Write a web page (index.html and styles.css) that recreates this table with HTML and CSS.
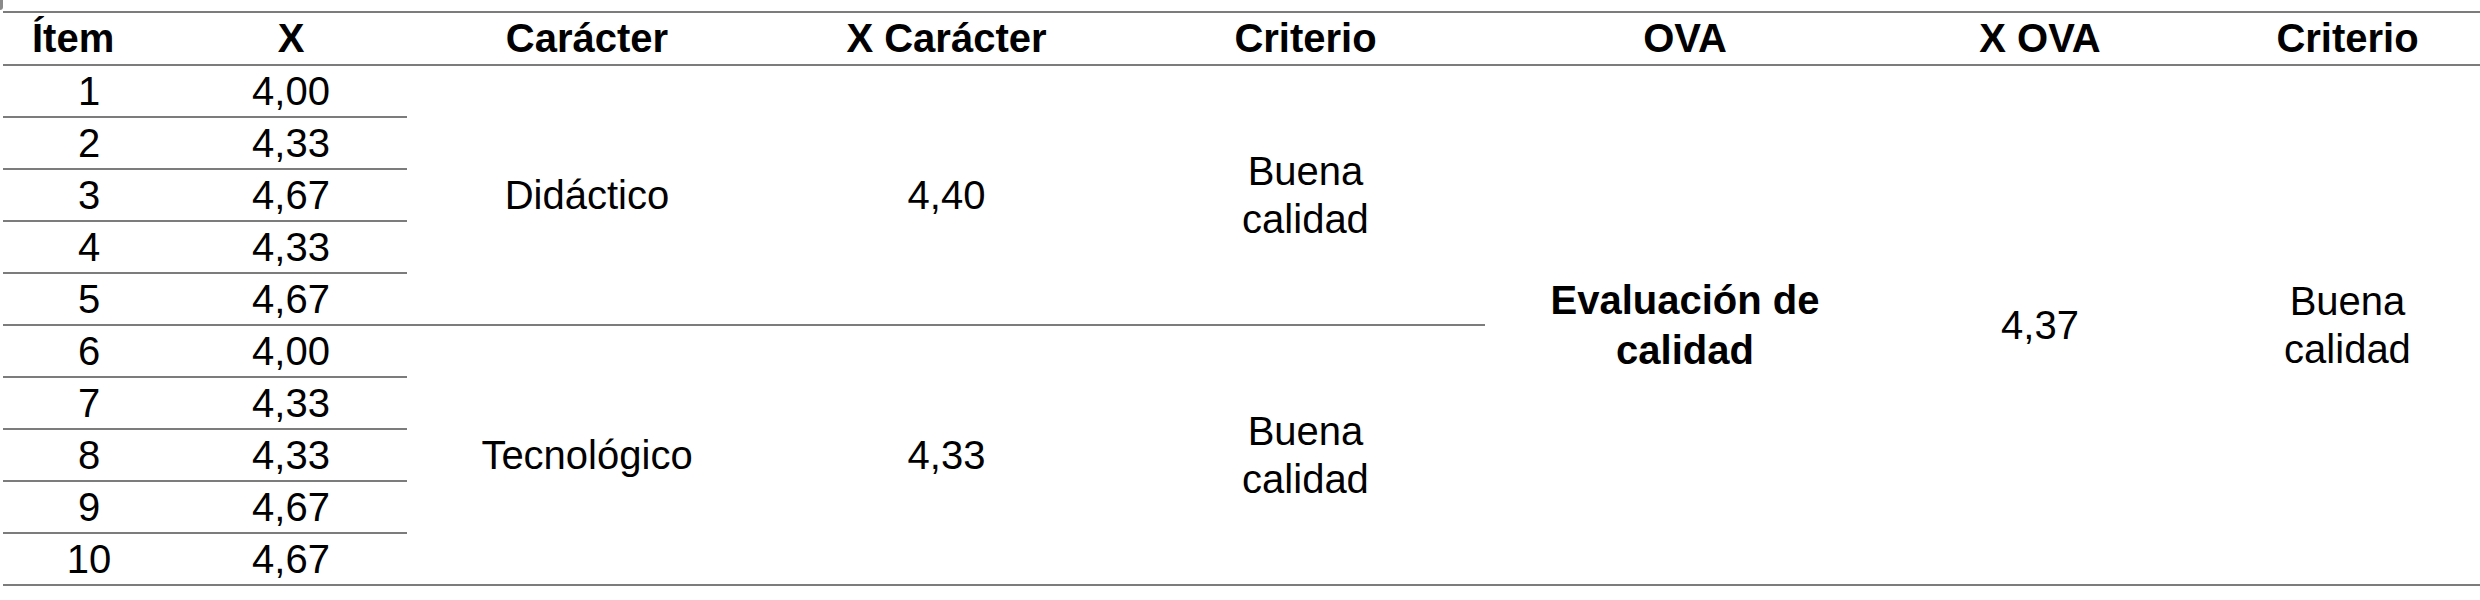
FILE: index.html
```html
<!DOCTYPE html>
<html lang="es">
<head>
<meta charset="utf-8">
<title>Evaluación de calidad OVA</title>
<link rel="stylesheet" href="styles.css">
</head>
<body>
<div class="page">
  <div class="table">
    <div class="cell head head-item">Ítem</div>
    <div class="cell head">X</div>
    <div class="cell head">Carácter</div>
    <div class="cell head">X Carácter</div>
    <div class="cell head">Criterio</div>
    <div class="cell head">OVA</div>
    <div class="cell head">X OVA</div>
    <div class="cell head">Criterio</div>

    <div class="cell num">1</div><div class="cell val">4,00</div>
    <div class="cell group g1 c3">Didáctico</div>
    <div class="cell group g1 c4">4,40</div>
    <div class="cell group g1 c5">Buena<br>calidad</div>
    <div class="cell big c6"><strong>Evaluación de<br>calidad</strong></div>
    <div class="cell big c7">4,37</div>
    <div class="cell big c8">Buena<br>calidad</div>

    <div class="cell num">2</div><div class="cell val">4,33</div>
    <div class="cell num">3</div><div class="cell val">4,67</div>
    <div class="cell num">4</div><div class="cell val">4,33</div>
    <div class="cell num">5</div><div class="cell val">4,67</div>

    <div class="cell num">6</div><div class="cell val">4,00</div>
    <div class="cell group g2 c3">Tecnológico</div>
    <div class="cell group g2 c4">4,33</div>
    <div class="cell group g2 c5">Buena<br>calidad</div>

    <div class="cell num">7</div><div class="cell val">4,33</div>
    <div class="cell num">8</div><div class="cell val">4,33</div>
    <div class="cell num">9</div><div class="cell val">4,67</div>
    <div class="cell num">10</div><div class="cell val">4,67</div>
  </div>
</div>
</body>
</html>
```

FILE: styles.css
```css
html, body {
  margin: 0;
  padding: 0;
  background: #ffffff;
  overflow: hidden;
}

body {
  width: 2480px;
  height: 600px;
  font-family: "Liberation Sans", Arial, sans-serif;
  font-size: 40px;
  color: #000000;
}

.page {
  position: relative;
  padding: 11px 0 0 3px;
}

.page::before {
  content: "";
  position: absolute;
  left: 0;
  top: 0;
  width: 3px;
  height: 10px;
  background: #8a8a8a;
  border-bottom-right-radius: 3px;
}

.table {
  width: 2497px;
  display: grid;
  grid-template-columns: 172px 232px 360px 359px 359px 400px 310px 305px;
  grid-template-rows: 53px repeat(10, 52px);
  border-top: 2px solid #7c7c7c;
}

.cell {
  box-sizing: border-box;
  display: flex;
  align-items: center;
  justify-content: center;
  text-align: center;
  line-height: 48px;
  border-bottom: 2px solid #7c7c7c;
  white-space: nowrap;
}

.head {
  font-weight: bold;
  padding-bottom: 1px;
}

.head-item {
  justify-content: flex-start;
  padding-left: 29px;
}

.num { grid-column: 1; }
.val { grid-column: 2; }

.group { grid-row: span 5; }
.g1 { grid-row: 2 / span 5; }
.g2 { grid-row: 7 / span 5; }
.c3 { grid-column: 3; }
.c4 { grid-column: 4; }
.c5 { grid-column: 5; }

.big { grid-row: 2 / span 10; }
.c6 { grid-column: 6; }
.c7 { grid-column: 7; }
.c8 { grid-column: 8; }

.big strong {
  font-weight: bold;
  line-height: 50px;
}
```
